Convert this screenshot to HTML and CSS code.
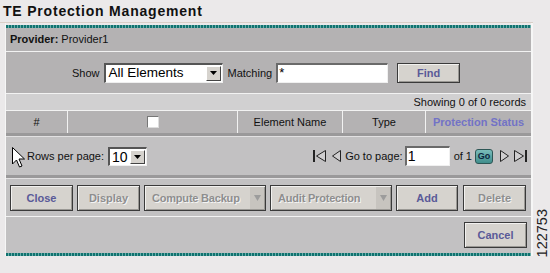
FILE: index.html
```html
<!DOCTYPE html>
<html>
<head>
<meta charset="utf-8">
<title>TE Protection Management</title>
<link rel="stylesheet" href="styles.css">
</head>
<body>
<div class="page">
  <div class="main">
    <div class="title">TE Protection Management</div>
    <div class="panel">
      <div class="teal"></div>
      <div class="provider"><span class="bold">Provider:</span>&nbsp;Provider1</div>
      <div class="line-white"></div>
      <div class="show-row">
        <span class="lbl">Show</span>
        <div class="select sel-all">
          <span class="sel-text">All Elements</span>
          <span class="sel-btn"><svg width="7" height="4" viewBox="0 0 7 4"><polygon points="0,0 7,0 3.5,4" fill="#000"/></svg></span>
        </div>
        <span class="lbl lbl-match">Matching</span>
        <div class="input inp-match">*</div>
        <button class="btn btn-on btn-find">Find</button>
      </div>
      <div class="line-white"></div>
      <div class="showing">Showing 0 of 0 records</div>
      <div class="line-white"></div>
      <div class="thead">
        <div class="th">#</div>
        <div class="th"><span class="check"></span></div>
        <div class="th">Element Name</div>
        <div class="th">Type</div>
        <div class="th th-sort">Protection Status</div>
      </div>
      <div class="sep"></div>
      <div class="pager">
        <svg class="cursor" width="13" height="21" viewBox="0 0 13 21"><path d="M0.5 0.5 L0.5 17 L4.5 13 L7.5 20 L10 19 L7 12 L12.5 12 Z" fill="#fff" stroke="#000" stroke-width="1" stroke-linejoin="miter"/></svg>
        <span class="rows-lbl">Rows per page:</span>
        <div class="select sel-rows">
          <span class="sel-text">10</span>
          <span class="sel-btn"><svg width="7" height="4" viewBox="0 0 7 4"><polygon points="0,0 7,0 3.5,4" fill="#000"/></svg></span>
        </div>
        <div class="nav">
          <svg class="ic-first" width="13" height="12" viewBox="0 0 13 12"><rect x="0" y="0" width="2" height="12" fill="#222"/><polygon points="12.5,0.5 3.5,6 12.5,11.5" fill="#cfcecf" stroke="#222" stroke-width="1"/></svg>
          <svg class="ic-prev" width="9" height="12" viewBox="0 0 9 12"><polygon points="8.5,0.5 0.5,6 8.5,11.5" fill="#cfcecf" stroke="#222" stroke-width="1"/></svg>
          <span class="goto">Go to page:</span>
          <div class="input inp-page">1</div>
          <span class="of">of 1</span>
          <span class="go">Go</span>
          <svg class="ic-next" width="9" height="12" viewBox="0 0 9 12"><polygon points="0.5,0.5 8.5,6 0.5,11.5" fill="#cfcecf" stroke="#222" stroke-width="1"/></svg>
          <svg class="ic-last" width="13" height="12" viewBox="0 0 13 12"><polygon points="0.5,0.5 9.5,6 0.5,11.5" fill="#cfcecf" stroke="#222" stroke-width="1"/><rect x="11" y="0" width="2" height="12" fill="#222"/></svg>
        </div>
      </div>
      <div class="sep"></div>
      <div class="actions">
        <button class="btn btn-on w63">Close</button>
        <button class="btn btn-off w63">Display</button>
        <button class="btn btn-off btn-drop"><span class="drop-text">Compute Backup</span><span class="drop-arrow"><svg width="7" height="6" viewBox="0 0 7 6"><polygon points="0,0 7,0 3.5,6" fill="#9c9c9c"/></svg></span></button>
        <button class="btn btn-off btn-drop"><span class="drop-text">Audit Protection</span><span class="drop-arrow"><svg width="7" height="6" viewBox="0 0 7 6"><polygon points="0,0 7,0 3.5,6" fill="#9c9c9c"/></svg></span></button>
        <button class="btn btn-on w62">Add</button>
        <button class="btn btn-off w63 btn-delete">Delete</button>
      </div>
      <div class="line-white"></div>
      <div class="cancel-row">
        <button class="btn btn-on w63">Cancel</button>
      </div>
      <div class="teal"></div>
    </div>
  </div>
  <div class="side">
    <span class="fig-id">122753</span>
  </div>
</div>
</body>
</html>
```
FILE: styles.css
```css
* { box-sizing: border-box; margin: 0; padding: 0; }

body {
  margin: 0;
  width: 550px;
  height: 273px;
  overflow: hidden;
  background: #ebe9ea;
  font-family: "Liberation Sans", Arial, sans-serif;
  font-size: 11px;
  color: #111;
}

.page { display: flex; height: 273px; }
.main { width: 533px; flex: none; }

.title {
  height: 23px;
  border-bottom: 1px solid #d9cfc8;
  padding-left: 3px;
  font-weight: bold;
  font-size: 14px;
  letter-spacing: 0.8px;
  line-height: 22px;
  color: #111;
}

.panel {
  margin-left: 5px;
  border-left: 1px solid #f6f6f6;
  border-right: 2px solid #f6f6f6;
  padding-top: 2px;
}

.teal {
  height: 3px;
  background: repeating-linear-gradient(90deg, #10726f 0 2px, #69aeab 2px 3px);
}

.line-white { height: 1px; background: #f2f2f2; }

.sep {
  height: 4px;
  border-top: 3px solid #9a999a;
  background: #e2e1e2;
}

.bold { font-weight: bold; }

.provider {
  height: 23px;
  line-height: 23px;
  padding-left: 4px;
  background: #b4b2b3;
  display: flex;
  align-items: center;
}

.show-row {
  height: 41px;
  background: #b4b2b3;
  display: flex;
  align-items: center;
  padding-left: 66px;
}
.lbl { margin-right: 4px; }
.lbl-match { margin-left: 5px; }

.select {
  display: flex;
  align-items: stretch;
  background: #fff;
  border-top: 2px solid #555;
  border-left: 2px solid #555;
  border-bottom: 1px solid #efefef;
  border-right: 1px solid #efefef;
}
.sel-text {
  flex: 1;
  font-size: 14px;
  line-height: 16px;
  padding-left: 3px;
  color: #000;
}
.sel-btn {
  width: 15px;
  margin: 1px;
  background: #d6d3ce;
  border-top: 1px solid #fff;
  border-left: 1px solid #fff;
  border-right: 1px solid #444;
  border-bottom: 1px solid #444;
  display: flex;
  align-items: center;
  justify-content: center;
}
.sel-all { width: 119px; height: 20px; }
.sel-all .sel-text { font-size: 13.5px; }
.sel-rows { width: 39px; height: 19px; margin-left: 4px; }
.sel-rows .sel-text { padding-left: 2px; }

.input {
  background: #fff;
  border-top: 2px solid #6a6a6a;
  border-left: 2px solid #6a6a6a;
  border-bottom: 1px solid #f0f0f0;
  border-right: 1px solid #f0f0f0;
  font-size: 13px;
  line-height: 16px;
  padding-left: 1px;
  color: #000;
}
.inp-match { width: 112px; height: 20px; }
.inp-page { width: 45px; height: 20px; margin-left: 2px; font-size: 14px; }

.btn {
  height: 26px;
  background: #d6d3ce;
  border: 1px solid #3a3a3a;
  box-shadow: inset 1px 1px 0 #f2f1ef, inset -1px -1px 0 #9a9894;
  font-family: "Liberation Sans", Arial, sans-serif;
  font-weight: bold;
  font-size: 11px;
  text-align: center;
}
.btn-on { color: #5a5a98; }
.btn-off { color: #8e8e8e; text-shadow: 1px 1px 0 #f4f4f4; }
.btn-find { width: 63px; height: 20px; margin-left: 9px; }

.w63 { width: 63px; }
.w62 { width: 62px; }

.btn-drop {
  width: 122px;
  display: flex;
  align-items: stretch;
  padding: 0;
}
.drop-text { flex: 1; text-align: left; padding-left: 7px; line-height: 24px; letter-spacing: -0.2px; }
.drop-arrow {
  width: 14px;
  margin: 1px 1px 1px 0;
  background: #c7c4bf;
  display: flex;
  align-items: center;
  justify-content: center;
}

.showing {
  height: 16px;
  line-height: 16px;
  background: #d1d0d1;
  text-align: right;
  padding-right: 5px;
}

.thead {
  display: grid;
  grid-template-columns: 61px 169px 104px 82px 1fr;
  column-gap: 1px;
  background: #f2f2f2;
  height: 22px;
}
.th {
  background: #b4b2b3;
  display: flex;
  align-items: center;
  justify-content: center;
}
.th-sort {
  font-weight: bold;
  color: #7272c6;
}
.check {
  width: 12px;
  height: 12px;
  background: #fff;
  border-top: 1px solid #777;
  border-left: 1px solid #777;
  border-bottom: 1px solid #ddd;
  border-right: 1px solid #ddd;
}

.pager {
  height: 38px;
  background: #c2c1c2;
  display: flex;
  align-items: center;
  padding-left: 6px;
  padding-right: 4px;
}
.cursor { flex: none; margin-top: 2px; }
.rows-lbl { margin-left: 2px; }

.nav {
  margin-left: auto;
  display: flex;
  align-items: center;
}
.ic-prev { margin-left: 6px; }
.goto { margin-left: 4px; }
.of { margin-left: 4px; }
.go {
  margin-left: 3px;
  width: 18px;
  height: 15px;
  border: 1px solid #2d5655;
  border-radius: 3px;
  background: linear-gradient(#7bbcbb, #3f8e8c);
  font-weight: bold;
  font-size: 9px;
  line-height: 13px;
  text-align: center;
  color: #0d2540;
}
.ic-next { margin-left: 7px; }
.ic-last { margin-left: 5px; }

.actions {
  height: 37px;
  background: #c2c1c2;
  display: flex;
  align-items: flex-start;
  gap: 4px;
  padding-top: 6px;
  padding-left: 4px;
}
.btn-delete { margin-left: 1px; }

.cancel-row {
  height: 36px;
  background: #c2c1c2;
  display: flex;
  justify-content: flex-end;
  align-items: flex-start;
  padding-top: 5px;
  padding-right: 4px;
}

.side {
  flex: 1;
  display: flex;
  align-items: flex-end;
  justify-content: center;
}
.fig-id {
  writing-mode: vertical-rl;
  transform: rotate(180deg);
  margin-bottom: 16px;
  font-size: 14.5px;
  line-height: 12px;
  color: #222;
}
```
